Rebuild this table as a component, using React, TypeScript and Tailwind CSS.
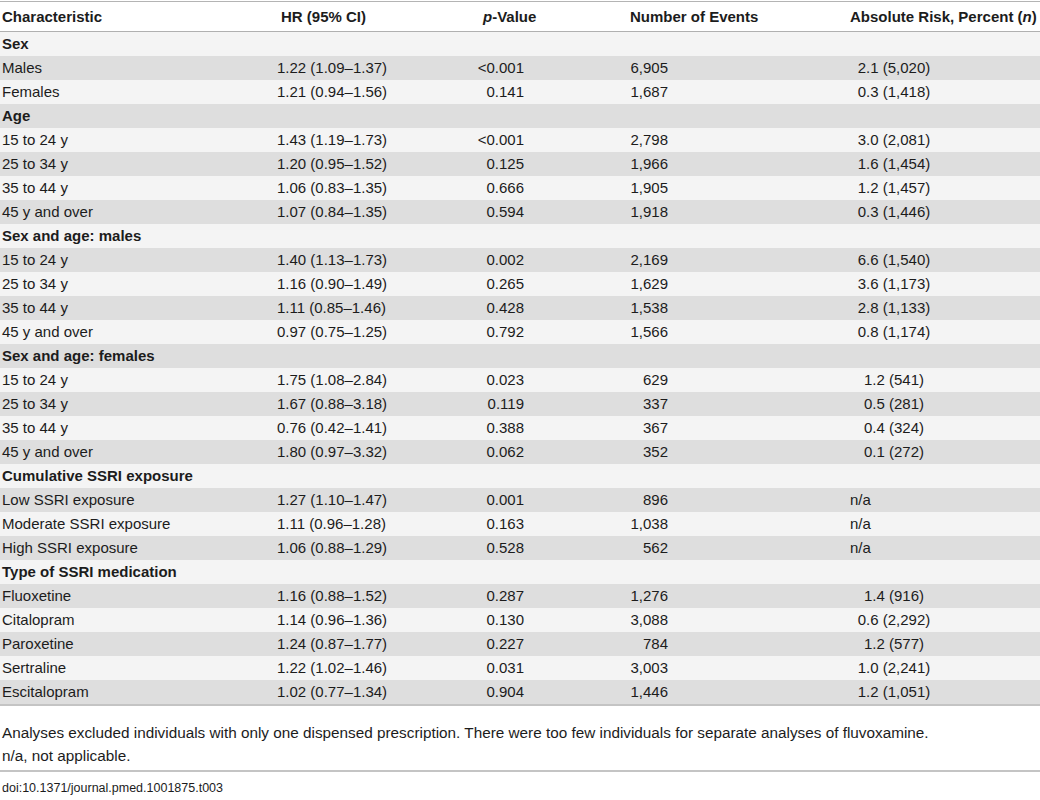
import React from "react";

type Row =
  | { kind: "group"; label: string }
  | { kind: "data"; label: string; hr: string; p: string; n: string; ar: string };

const rows: Row[] = [
  { kind: "group", label: "Sex" },
  { kind: "data", label: "Males", hr: "1.22 (1.09–1.37)", p: "<0.001", n: "6,905", ar: "2.1 (5,020)" },
  { kind: "data", label: "Females", hr: "1.21 (0.94–1.56)", p: "0.141", n: "1,687", ar: "0.3 (1,418)" },
  { kind: "group", label: "Age" },
  { kind: "data", label: "15 to 24 y", hr: "1.43 (1.19–1.73)", p: "<0.001", n: "2,798", ar: "3.0 (2,081)" },
  { kind: "data", label: "25 to 34 y", hr: "1.20 (0.95–1.52)", p: "0.125", n: "1,966", ar: "1.6 (1,454)" },
  { kind: "data", label: "35 to 44 y", hr: "1.06 (0.83–1.35)", p: "0.666", n: "1,905", ar: "1.2 (1,457)" },
  { kind: "data", label: "45 y and over", hr: "1.07 (0.84–1.35)", p: "0.594", n: "1,918", ar: "0.3 (1,446)" },
  { kind: "group", label: "Sex and age: males" },
  { kind: "data", label: "15 to 24 y", hr: "1.40 (1.13–1.73)", p: "0.002", n: "2,169", ar: "6.6 (1,540)" },
  { kind: "data", label: "25 to 34 y", hr: "1.16 (0.90–1.49)", p: "0.265", n: "1,629", ar: "3.6 (1,173)" },
  { kind: "data", label: "35 to 44 y", hr: "1.11 (0.85–1.46)", p: "0.428", n: "1,538", ar: "2.8 (1,133)" },
  { kind: "data", label: "45 y and over", hr: "0.97 (0.75–1.25)", p: "0.792", n: "1,566", ar: "0.8 (1,174)" },
  { kind: "group", label: "Sex and age: females" },
  { kind: "data", label: "15 to 24 y", hr: "1.75 (1.08–2.84)", p: "0.023", n: "629", ar: "1.2 (541)" },
  { kind: "data", label: "25 to 34 y", hr: "1.67 (0.88–3.18)", p: "0.119", n: "337", ar: "0.5 (281)" },
  { kind: "data", label: "35 to 44 y", hr: "0.76 (0.42–1.41)", p: "0.388", n: "367", ar: "0.4 (324)" },
  { kind: "data", label: "45 y and over", hr: "1.80 (0.97–3.32)", p: "0.062", n: "352", ar: "0.1 (272)" },
  { kind: "group", label: "Cumulative SSRI exposure" },
  { kind: "data", label: "Low SSRI exposure", hr: "1.27 (1.10–1.47)", p: "0.001", n: "896", ar: "n/a" },
  { kind: "data", label: "Moderate SSRI exposure", hr: "1.11 (0.96–1.28)", p: "0.163", n: "1,038", ar: "n/a" },
  { kind: "data", label: "High SSRI exposure", hr: "1.06 (0.88–1.29)", p: "0.528", n: "562", ar: "n/a" },
  { kind: "group", label: "Type of SSRI medication" },
  { kind: "data", label: "Fluoxetine", hr: "1.16 (0.88–1.52)", p: "0.287", n: "1,276", ar: "1.4 (916)" },
  { kind: "data", label: "Citalopram", hr: "1.14 (0.96–1.36)", p: "0.130", n: "3,088", ar: "0.6 (2,292)" },
  { kind: "data", label: "Paroxetine", hr: "1.24 (0.87–1.77)", p: "0.227", n: "784", ar: "1.2 (577)" },
  { kind: "data", label: "Sertraline", hr: "1.22 (1.02–1.46)", p: "0.031", n: "3,003", ar: "1.0 (2,241)" },
  { kind: "data", label: "Escitalopram", hr: "1.02 (0.77–1.34)", p: "0.904", n: "1,446", ar: "1.2 (1,051)" },
];

const grid = "grid grid-cols-[277px_183px_80px_140px_360px]";

export default function App() {
  return (
    <div
      className="w-[1040px] h-[800px] bg-white text-[#1c1c1c] text-[15px] overflow-hidden"
      style={{ fontFamily: '"Liberation Sans", Arial, Helvetica, sans-serif' }}
    >
      <div className="pt-px">
        <div className="border-t border-[#b4b4b4]" />
        {/* header */}
        <div className={`${grid} h-[30px] items-center font-bold bg-white border-b border-[#b0b0b0]`}>
          <div className="pl-[2px] pt-px">Characteristic</div>
          <div className="pl-[4px] pt-px">HR (95% CI)</div>
          <div className="pl-[23px] pt-px whitespace-nowrap">
            <span className="italic">p</span>-Value
          </div>
          <div className="pl-[90px] pt-px whitespace-nowrap">Number of Events</div>
          <div className="pl-[170px] pt-px whitespace-nowrap">
            Absolute Risk, Percent (<span className="italic">n</span>)
          </div>
        </div>
        {/* body */}
        <div>
          {rows.map((r, i) => {
            const bg = i % 2 === 0 ? "bg-[#f4f4f4]" : "bg-[#dedede]";
            if (r.kind === "group") {
              return (
                <div key={i} className={`${bg} h-[24px] flex items-center pl-[2px] font-bold`}>
                  {r.label}
                </div>
              );
            }
            return (
              <div key={i} className={`${grid} ${bg} h-[24px] items-center whitespace-nowrap`}>
                <div className="pl-[2px]">{r.label}</div>
                <div>{r.hr}</div>
                <div className="text-right pr-[16px]">{r.p}</div>
                <div className="text-right pr-[12px]">{r.n}</div>
                <div className="pl-[170px]">
                  {r.ar === "n/a" ? (
                    <span>n/a</span>
                  ) : (
                    <div className="w-[88px] flex justify-center">{r.ar}</div>
                  )}
                </div>
              </div>
            );
          })}
        </div>
        <div className="border-b-2 border-[#c4c4c4]" />
        {/* footnotes */}
        <div className="pt-[15px] pl-[2px] leading-[23px] text-[15.3px]">
          <div>
            Analyses excluded individuals with only one dispensed prescription. There were too few individuals for
            separate analyses of fluvoxamine.
          </div>
          <div>n/a, not applicable.</div>
        </div>
        <div className="mt-[3px] border-b-2 border-[#c4c4c4]" />
        <div className="pl-[2px] pt-[6px] text-[12.5px] leading-[20px]">doi:10.1371/journal.pmed.1001875.t003</div>
      </div>
    </div>
  );
}
